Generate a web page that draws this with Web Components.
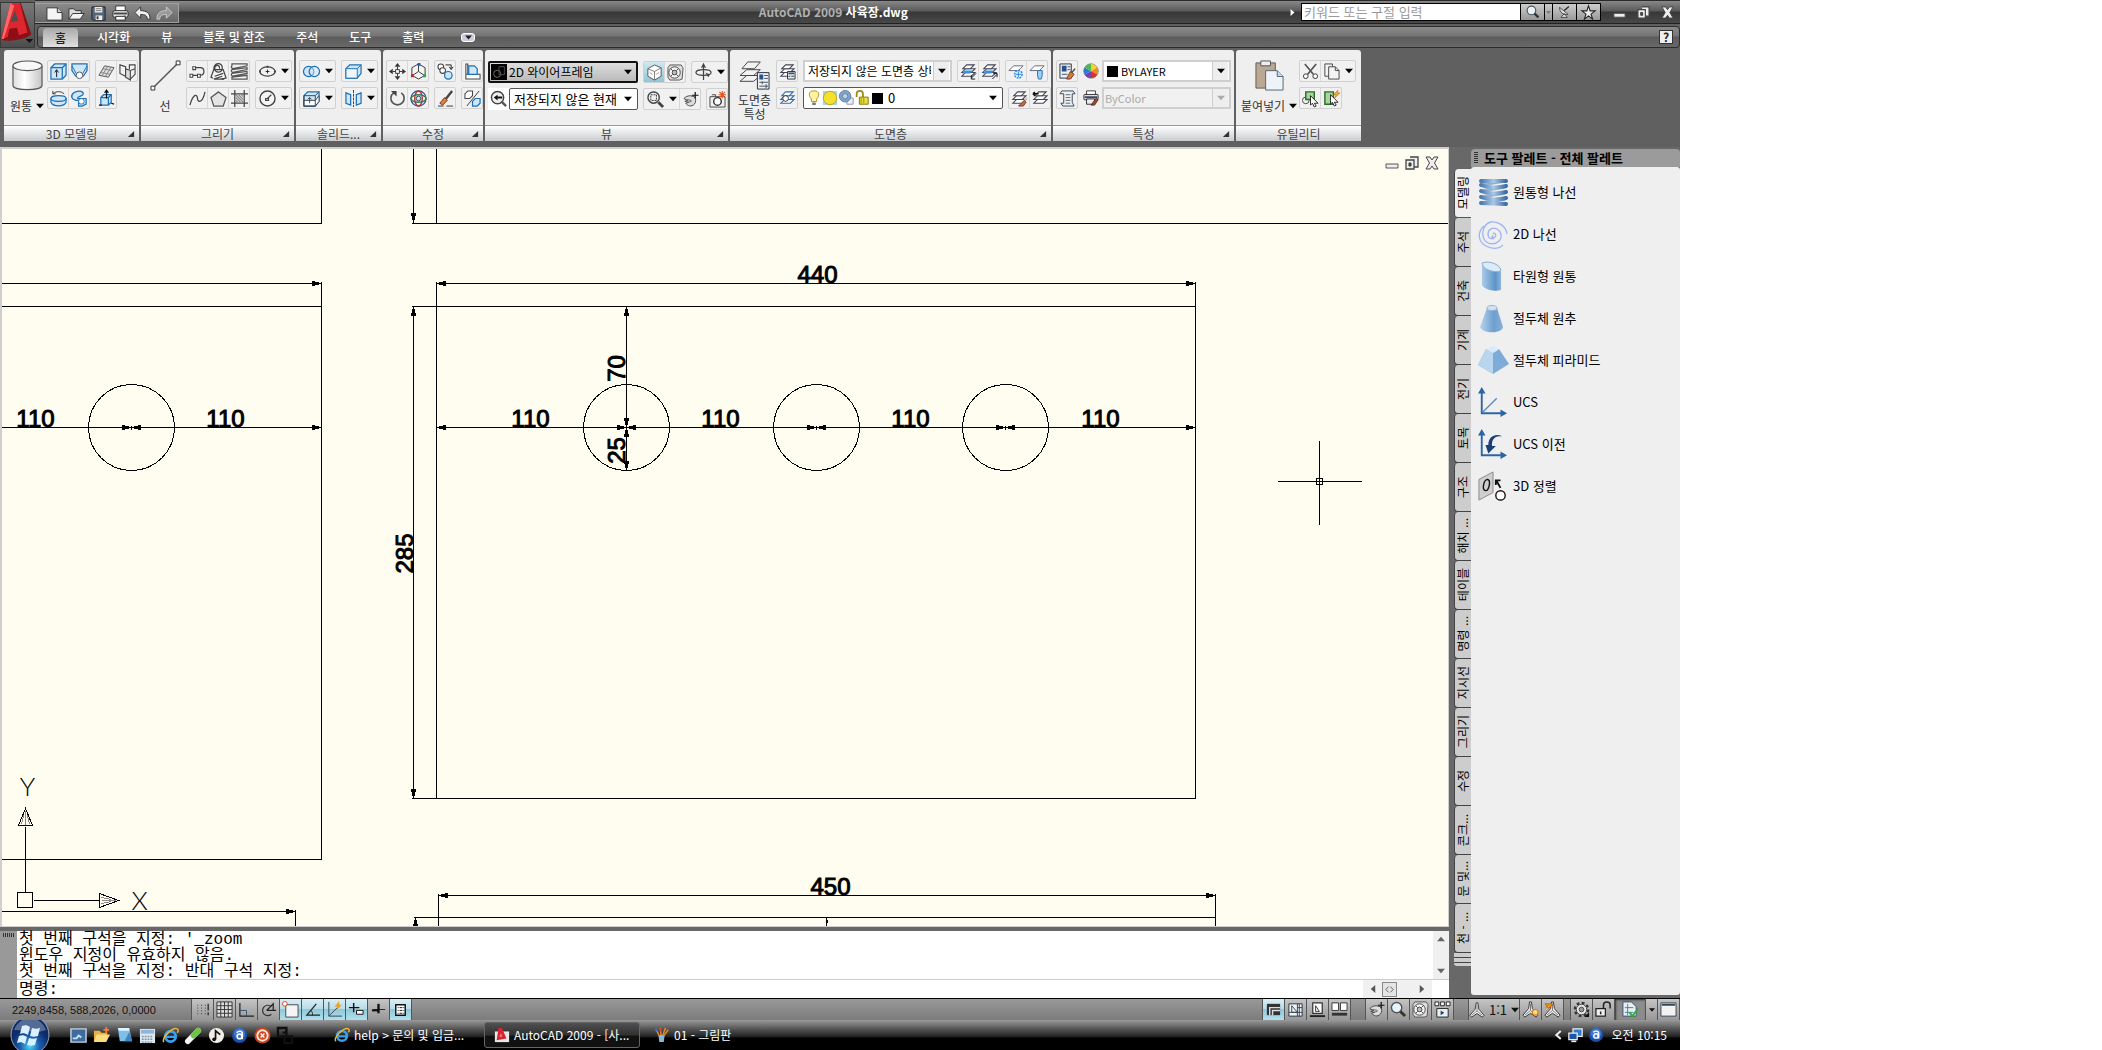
<!DOCTYPE html>
<html lang="ko">
<head>
<meta charset="utf-8">
<title>AutoCAD 2009 사육장.dwg</title>
<style>
  body {
    margin: 0;
    background: #fff;
    color: #222;
    font: 12px/16px "Noto Sans CJK KR", "Liberation Sans", sans-serif;
  }
</style>
</head>
<body>
<cad-app></cad-app>

<script>
// =============================================================
//  Icons. Every entry is [viewBox size, svg body].
//  <cad-icon name="save" size="18"></cad-icon>
// =============================================================
const G = 'fill="none" stroke="#444" stroke-width="1.3"';
const B = 'fill="#cfe6f7" stroke="#1c6fb5" stroke-width="1.3"';
const W = 'fill="#fff" stroke="#444" stroke-width="1.1"';
const layers = (c) => `<g fill="#fff" stroke="${c || '#445'}" stroke-width="1.1"><path d="M2 14l4-4h10l-4 4z"/><path d="M2 10l4-4h10l-4 4z"/><path d="M3 6l4-4h8l-4 4z"/></g>`;
const globe = '<circle cx="9" cy="9" r="8" fill="#1c50a8"/><circle cx="9" cy="7" r="6" fill="#3d78cc"/>';
const ie = '<circle cx="9" cy="10" r="5.5" fill="none" stroke="#39a0ee" stroke-width="3"/><path d="M4 10.500h11" stroke="#39a0ee" stroke-width="2.500"/><path d="M2 16C-1 12 11 0 16 2c2 1 1 3 0 4" fill="none" stroke="#f2b632" stroke-width="1.600"/>';
const person = '<path d="M8 1h2l1 7 6 7-2 2-6-4-6 4-2-2 6-7z" fill="#eee" stroke="#333"/><path d="M9 3v7M3 15l6-5 6 5" fill="none" stroke="#777"/>';
const hand = '<path d="M2 8c2-2 4-3 7-3l4 1c2 2 2 6 0 8-3 3-7 2-9-1l3-1-4-1 3-1-4-2z" fill="#ddd" stroke="#444"/><path d="M5 9l5 1M6 12l4-1" stroke="#666"/><path d="M14 1v7M10.500 4.500h7" stroke="#111" stroke-width="1.300"/>';
const lens = '<circle cx="7" cy="7" r="5.500" fill="#e6f4fb" stroke="#555" stroke-width="1.500"/><path d="M11 11l5 5" stroke="#333" stroke-width="3"/>';
const axes = '<path d="M4 29V4M4 28H28" stroke="#2c65a5" stroke-width="2" fill="none"/><path d="M0 7L4 0l4 7zM24 24l7 4-7 4z" fill="#2c65a5"/>';

const ICONS = {
  logo: [40, '<path d="M13 0h10l11 33c-5 5-20 8-31 6z" fill="#8d0f16"/><path d="M12 0h10l8 31-9 3-2-8-8 1-2 9-7 2z" fill="#dd2630"/><path d="M17 8l3 11-8 1z" fill="#4d4d4d"/><path d="M12 0l-9 38 2 0L16 3z" fill="#ff6a6a"/><path d="M28 38h8l-4 4z" fill="#111"/>'],
  newf: [18, '<path d="M1 3h11l5 5v8H1z" fill="#f4f4f4" stroke="#333"/><path d="M12 3v5h5" fill="#ccc" stroke="#333"/>'],
  open: [18, '<path d="M1 15V4h5l2 2h6v3" fill="#ddd" stroke="#333"/><path d="M1 15l4-6h12l-4 6z" fill="#f2f2f2" stroke="#333"/>'],
  save: [18, '<path d="M2 2h14v14H3l-1-1z" fill="#566479" stroke="#222"/><path d="M5 2h8v6H5zM6 11h7v5H6z" fill="#eee"/><path d="M6 4h6M6 6h6" stroke="#777"/><path d="M7 12h2v3H7z" fill="#333"/>'],
  print: [18, '<path d="M4 6V1h10v5" fill="#fff" stroke="#333"/><rect x="1" y="6" width="16" height="7" rx="2" fill="#eee" stroke="#222"/><path d="M2 9h14" stroke="#444" stroke-width="2"/><path d="M4 12h10v4H4z" fill="#fff" stroke="#222"/><path d="M12 11h3" stroke="#6c3"/>'],
  undo: [18, '<path d="M1 8l6-6v4c6 0 10 2 10 9h-3c0-4-2-5-7-5v4z" fill="#f2f2f2" stroke="#333"/>'],
  redo: [18, '<path d="M17 8l-6-6v4C5 6 1 8 1 15h3c0-4 2-5 7-5v4z" fill="#999" stroke="#ccc"/>'],
  cyl: [32, '<defs><linearGradient id="c"><stop stop-color="#ddd"/><stop offset=".4" stop-color="#fff"/><stop offset="1" stop-color="#c4c4c4"/></linearGradient></defs><path d="M1 6v20c0 6 30 6 30 0V6" fill="url(#c)" stroke="#555" stroke-width="1.200"/><ellipse cx="16" cy="6" rx="15" ry="5" fill="#f8f8f8" stroke="#555" stroke-width="1.200"/>'],
  extrude: [18, `<path d="M1 5l4-4h12v12l-4 4H1z" ${B}/><path d="M1 5h12v12M13 5l4-4" ${B} fill-opacity="0"/><path d="M7 15V8M5 10l2-3 2 3" fill="none" stroke="#112"/>`],
  loft: [18, `<path d="M1 1h16v7l-4 6H5L1 8z" ${B}/><path d="M1 3l5 9M17 3l-5 9" stroke="#1c6fb5"/><circle cx="9" cy="13" r="3.500" fill="#fff" stroke="#456"/>`],
  revolve: [18, `<path d="M1 9v4c2 5 14 5 16 0V9z" ${B}/><ellipse cx="9" cy="9" rx="8" ry="3" ${B}/><path d="M3 4c4-3 8-3 12 0M3 1v3h3" fill="none" stroke="#333"/>`],
  sweep: [18, `<path d="M3 3c4-3 10-2 10 1s-6 2-6 5h9v6l-4 2H8v-6C0 11-1 6 3 3z" ${B}/><circle cx="11" cy="12" r="3" fill="#fff" stroke="#1c6fb5"/>`],
  mesh: [18, '<path d="M1 13L7 3l10 2-6 10z" fill="#ddd" stroke="#555"/><path d="M3 10l10 2M5 6l10 2M4 14l6-10M8 14l6-10" stroke="#888"/>'],
  planes: [18, '<path d="M1 2l6 2v10l-6-3z" fill="#f2f2f2" stroke="#444" stroke-width="1.200"/><path d="M7 6l5 2v10l-5-3z" fill="#ddd" stroke="#444" stroke-width="1.200"/><path d="M12 8l5-2V2h-6v5M12 17l5-5V6" fill="#f2f2f2" stroke="#444" stroke-width="1.200"/>'],
  pressp: [18, `<path d="M3 8l3-3h8v8l-3 3H3z" ${B}/><path d="M3 8h8v8M11 8l3-3" ${B} fill-opacity="0"/><path d="M9 9V1M7 3l2-3 2 3M1 16h3M14 14l3 1" fill="none" stroke="#111" stroke-width="1.300"/>`],
  line: [32, '<path d="M3 29L29 3" stroke="#555" stroke-width="1.500"/><path d="M1 27h4v4H1zM27 1h4v4h-4z" fill="#fff" stroke="#333"/>'],
  pline: [18, `<path d="M2 13h8M6 5h6c5 0 5 8 0 8" ${G}/><path d="M1 12h3v3H1zM9 12h3v3H9zM4 4h3v3H4z" ${W}/>`],
  donut: [18, `<path d="M3 16L1 15 4 7h10l3 9-5 1" ${G}/><path d="M4 7c0-8 9-8 9-2s-8 6-8 1 6-4 5 0M4 17l9-3M5 14l9-3M5 17h10" ${G}/>`],
  helix: [18, '<g fill="none" stroke="#555" stroke-width="1.300"><path d="M1 1h16v2L2 6c-2-1-2-2-1-3zM17 5v2L2 10c-2-1-2-2-1-3zM17 9v2L2 14c-2-1-2-2-1-3zM17 13v4H1v-2z"/></g>'],
  spline: [18, `<path d="M1 16C5 2 9 5 9 9s5 6 8-7" ${G}/>`],
  poly: [18, '<path d="M9 2l8 6-3 9H4L1 8z" fill="#e4e4e4" stroke="#555" stroke-width="1.300"/>'],
  hatch: [18, `<path d="M4 0v18M14 0v18M0 4h18M0 14h18" ${G}/><path d="M5 8l5 5M5 5l8 8M8 5l5 5M5 11l2 2M11 5l2 2" stroke="#888" stroke-width="1.300"/>`],
  ellipse: [18, `<ellipse cx="9" cy="9" rx="8" ry="5" ${G}/><path d="M9 7v4M7 9h4" stroke="#222"/><path d="M0 8h2v2H0zM16 8h2v2h-2zM8 3h2v2H8z" fill="#444"/>`],
  circle: [18, `<circle cx="9" cy="9" r="8" fill="#f4f4f4" stroke="#444" stroke-width="1.500"/><path d="M9 9l4-4M7 9h3v2H7z" ${G}/>`],
  union: [18, `<circle cx="6" cy="9" r="5.500" ${B}/><circle cx="12" cy="9" r="5.500" ${B} fill-opacity=".5"/>`],
  box: [18, `<path d="M1 6l4-4h12v9l-4 5H1z" ${B}/><path d="M1 6h12v10H1z" fill="#eef6fc" stroke="#1c6fb5"/><path d="M13 6l4-4" stroke="#1c6fb5"/>`],
  slice: [18, `<path d="M1 6l4-4h12v10l-4 5H1z" ${B}/><path d="M1 11h12l4-5v6l-4 5H1z" fill="#fff" stroke="#345"/><path d="M1 6h12v11H1zM13 6l4-4M7 14V8M5 10l2-2 2 2" fill="none" stroke="#345"/>`],
  mirror3: [18, `<path d="M1 3l5 2v11l-5-2zM17 3l-5 2v11l5-2z" ${B}/><path d="M9 0v18" stroke="#333" stroke-dasharray="3 1"/>`],
  move: [18, '<path d="M9 0l3 4H6zM9 18l3-4H6zM0 9l4-3v6zM18 9l-4-3v6z" fill="#333"/><path d="M7 7h4v4H7z" fill="#fff" stroke="#333"/><path d="M9 4v3M9 11v3M4 9h3M11 9h3" stroke="#333"/>'],
  move3: [18, '<path d="M9 1l7 4v8l-7 4-7-4V5z" fill="#f4f4f4" stroke="#333"/><path d="M9 9V2M9 9l-6 4M9 9l6 4" stroke="#333"/><path d="M1 12h3v3H1z" fill="#c22"/><path d="M14 12h3v3h-3z" fill="#2a5"/><path d="M8 0h3v3H8z" fill="#25c"/>'],
  copy: [18, `<circle cx="4" cy="4" r="3" ${W}/><circle cx="6" cy="8" r="3" ${W}/><circle cx="12" cy="13" r="4" ${B}/><path d="M9 2h6v4M13 4l2 3 2-3" fill="none" stroke="#222"/>`],
  stretch: [18, `<path d="M2 1h2v11H2zM2 12h15v5H2z" ${W}/><path d="M5 3h6l3 3v6H5z" ${B}/>`],
  rotate: [18, '<path d="M5 3a7 7 0 1 0 8 0" fill="none" stroke="#555" stroke-width="1.700"/><path d="M2 1h6v6z" fill="#444"/>'],
  rot3: [18, '<circle cx="9" cy="9" r="8" fill="none" stroke="#2a4f9a" stroke-width="1.300"/><ellipse cx="9" cy="9" rx="4" ry="8" fill="none" stroke="#b33" stroke-width="1.500"/><ellipse cx="9" cy="9" rx="8" ry="4" fill="none" stroke="#3a7a4a" stroke-width="1.500"/><circle cx="9" cy="9" r="2.500" fill="#cde" stroke="#345"/>'],
  erase: [18, '<path d="M16 1L8 11" stroke="#444" stroke-width="2.500"/><path d="M8 8l3 3-5 5-3-2z" fill="#e08030" stroke="#733"/><path d="M1 17h6M10 17h7" stroke="#333"/>'],
  chamfer: [18, `<path d="M1 4l3-3h5v5L6 9H1z" ${W}/><path d="M9 12l3-3h5v5l-3 3H9z" ${B}/><path d="M3 17L16 1" stroke="#333"/>`],
  vs: [18, '<path d="M0 0h18v18H0z" fill="#000"/><circle cx="7" cy="11" r="4" fill="none" stroke="#777"/><path d="M9 3h6v9H9z" fill="none" stroke="#555"/>'],
  back: [18, '<circle cx="8" cy="8" r="6.500" fill="#eee" stroke="#444" stroke-width="1.500"/><path d="M4 8l4-3v2h5v2H8v2z" fill="#111"/><path d="M12 12l5 5" stroke="#555" stroke-width="2.500"/>'],
  cube: [18, '<path d="M2 5l7-4 7 3v9l-7 4-7-4z" fill="#fff" stroke="#555"/><path d="M2 5l7 3v9M9 8l7-4" fill="none" stroke="#777"/><path d="M11 11l3-2M4 9l3 2" stroke="#999"/>'],
  wheel: [18, '<path d="M3 1h12l2 3-1 12-3 1H3l-2-3V4z" fill="#ddd" stroke="#555"/><circle cx="8" cy="9" r="6" fill="#f6f6f6" stroke="#444"/><circle cx="8" cy="9" r="2.500" fill="#bbb" stroke="#444"/><path d="M4 5l2 2M12 5l-2 2M4 13l2-2M12 13l-2-2" stroke="#444"/>'],
  orbit: [18, `<path d="M9 1v16M7 4l2-4 2 4" ${G}/><ellipse cx="9" cy="9" rx="8" ry="3" ${G}/><path d="M11 9l3 5 2-3z" fill="#444"/>`],
  zoomw: [18, '<circle cx="7" cy="7" r="6" fill="#eee" stroke="#444" stroke-width="1.500"/><path d="M4 4h6v6H4z" fill="none" stroke="#333" stroke-dasharray="2 1"/><path d="M12 12l5 5" stroke="#444" stroke-width="3"/>'],
  pan: [18, hand],
  camera: [18, '<path d="M1 6h16v11H1zM3 4h4v2" fill="#eee" stroke="#444"/><circle cx="9" cy="11" r="4" fill="#fff" stroke="#333" stroke-width="1.500"/><path d="M14 0v8M10 4h8M11 1l6 6M17 1l-6 6" stroke="#e5541c" stroke-width="1.200"/>'],
  layprop: [32, '<g fill="#f2f2f2" stroke="#444"><path d="M1 22l7-6h14l-7 6zM1 16l7-6h14l-7 6zM3 9l6-7h13l-6 7z"/></g><path d="M19 13h12v17H19z" fill="#eee" stroke="#234"/><path d="M21 15h4v5h-4z" fill="#27518a"/><path d="M26 16h4M26 19h4M21 23h9M21 27h9M24 22v3M28 25v4" stroke="#456"/>'],
  laystate: [18, layers() + '<path d="M9 9h8v8H9z" fill="#eee" stroke="#234"/><path d="M10 11h6" stroke="#27518a" stroke-width="2"/><path d="M10 14h2M13 14h3" stroke="#333"/>'],
  layiso: [18, layers('#2a6cb0') + '<circle cx="7" cy="9" r="3" fill="#fff" stroke="#333"/>'],
  laydown: [18, layers() + '<path d="M5 8h9l-3 3H2z" fill="#3a8fd8"/><path d="M17 11l-5 5M12 13v4h4" fill="none" stroke="#111"/>'],
  layup: [18, layers() + '<path d="M5 8h9l-3 3H2z" fill="#3a8fd8"/><path d="M12 17l5-5M13 11h4v4" fill="none" stroke="#111"/>'],
  layfrz: [18, '<path d="M1 8l5-5h10l-5 5z" fill="#fff" stroke="#667"/><circle cx="11" cy="12" r="4" fill="#e4f2fc" stroke="#2c86d8" stroke-width="1.500" stroke-dasharray="2 1"/><path d="M11 9v6M8 12h6" stroke="#2c86d8"/>'],
  layoff: [18, '<path d="M1 8l5-5h10l-5 5z" fill="#fff" stroke="#667"/><path d="M9 8h5v5l-1 4h-3l-1-4z" fill="#9cd0f4" stroke="#2a6cb0"/>'],
  laymatch: [18, layers() + '<path d="M17 8l-4 5" stroke="#ccc" stroke-width="2"/><path d="M14 11l2 2-3 4H8z" fill="#c8702a" stroke="#733"/>'],
  layprev: [18, layers() + '<path d="M1 4h6M1 4l2-2M1 4l2 2" fill="none" stroke="#111" stroke-width="1.500"/>'],
  bulb: [18, '<path d="M9 1c-7 0-6 6-3 9v3h6v-3c3-3 4-9-3-9z" fill="#fff3a0" stroke="#a98a1a"/><path d="M7 14h4v3H7z" fill="#777"/>'],
  sun: [18, '<path d="M1 1h16v16H1z" fill="#9fd8e8"/><circle cx="9" cy="9" r="7.500" fill="#f4e12c" stroke="#c8a010"/>'],
  vpfrz: [18, '<path d="M10 9h7v7h-7z" fill="#eef" stroke="#88a"/><circle cx="8" cy="7" r="6.500" fill="#7fa4c8" stroke="#5b7da0"/><circle cx="8" cy="7" r="3" fill="#bcd2e6" stroke="#5b7da0"/>'],
  lock: [18, '<path d="M3 8V4c0-4 7-4 7 0v4" fill="none" stroke="#998c10" stroke-width="2"/><path d="M6 8h10v8H6z" fill="#e8de3c" stroke="#7a7010"/><path d="M8 9v6M11 9v6" stroke="#998c10"/>'],
  black: [16, '<path d="M2 3h11v11H2z" fill="#000"/>'],
  match: [18, '<path d="M1 1h12v15H1z" fill="#eee" stroke="#234"/><path d="M3 3h5v6H3z" fill="#27518a"/><path d="M9 4h3M9 7h3M3 12h6" stroke="#456"/><path d="M17 6l-4 5" stroke="#444" stroke-width="1.500"/><path d="M12 9l4 3-4 5H8z" fill="#d08038" stroke="#733"/>'],
  color: [18, '<circle cx="9" cy="9" r="8" fill="#fff" stroke="#666"/><path d="M9 9V1a8 8 0 0 1 7 4z" fill="#f3d22e"/><path d="M9 9l7-4a8 8 0 0 1 0 8z" fill="#f08a24"/><path d="M9 9l7 4a8 8 0 0 1-7 4z" fill="#d8322c"/><path d="M9 9v8a8 8 0 0 1-7-4z" fill="#7a3fb0"/><path d="M9 9l-7 4a8 8 0 0 1 0-8z" fill="#2f7bd4"/><path d="M9 9L2 5a8 8 0 0 1 7-4z" fill="#4fb848"/>'],
  list: [18, '<path d="M3 1h12l2 3h-3v9l2 4H4l-2-3h3V4H1z" fill="#eef0f2" stroke="#345"/><path d="M7 5h5M7 8h5M7 11h5M7 14h5" stroke="#567"/>'],
  plotst: [18, '<path d="M4 6V1h10v5" fill="#fff" stroke="#333"/><rect x="1" y="5" width="16" height="6" rx="1" fill="#dde" stroke="#222"/><path d="M2 8h14" stroke="#446" stroke-width="2"/><path d="M4 10h9v6H4z" fill="#eee" stroke="#222"/><path d="M15 9l2 2-4 6H9z" fill="#a05028" stroke="#522"/>'],
  paste: [32, '<path d="M2 3h20v26H2z" fill="#b9a994" stroke="#665a4c"/><path d="M7 1h10v5H7z" fill="#eee" stroke="#555"/><path d="M12 11h12l6 6v14H12z" fill="#eef3f8" stroke="#567"/><path d="M24 11v6h6" fill="#cbd8e4" stroke="#567"/>'],
  cut: [18, '<path d="M3 1l9 11M15 1L6 12" stroke="#555" stroke-width="1.800"/><circle cx="4" cy="14" r="2.500" fill="#fff" stroke="#333"/><circle cx="14" cy="14" r="2.500" fill="#fff" stroke="#333"/>'],
  copyclip: [18, '<path d="M2 1h8v13H2z" fill="#f4f4f4" stroke="#444"/><path d="M6 4h7l4 4v9H6z" fill="#f4f4f4" stroke="#444"/><path d="M13 4v4h4" fill="none" stroke="#444"/>'],
  selsim: [18, '<circle cx="4" cy="11" r="3.500" fill="none" stroke="#444"/><path d="M4 2h9v8H4z" fill="#a7d69a" stroke="#2a6a2a" stroke-width="1.500"/><path d="M9 6v10l2-2 2 4 2-1-2-3h4z" fill="#fff" stroke="#222"/>'],
  qsel: [18, '<path d="M2 2h9v13H2z" fill="#a7d69a" stroke="#2a6a2a" stroke-width="1.500"/><path d="M8 5v10l2-2 2 4 2-1-2-3h4z" fill="#fff" stroke="#222"/><path d="M16 0l-5 5h3l-2 4 6-6h-3z" fill="#f4b020" stroke="#c46010" stroke-width=".6"/>'],
  lens: [18, lens],
  dish: [18, '<path d="M2 3c0 7 5 10 11 9zM4 16h8l-4-5z" fill="#ddd" stroke="#333"/><path d="M8 7l6-5" stroke="#222" stroke-width="1.500"/>'],
  star: [18, '<path d="M9 1l2 6h6l-5 4 2 6-5-4-5 4 2-6-5-4h6z" fill="#eee" stroke="#222" stroke-width="1.300"/>'],
  min: [14, '<path d="M1 8h12v4H1z" fill="#eee" stroke="#555"/>'],
  restore: [14, '<path d="M5 1h8v10H9" fill="#eee" stroke="#444" stroke-width="1.300"/><path d="M1 4h8v9H1z" fill="#eee" stroke="#444" stroke-width="1.300"/><path d="M4 7h2v3H4z" fill="#555" stroke="#333"/>'],
  close: [14, '<path d="M1 1h4l2 3 2-3h4L9.500 7l3.500 6H9l-2-3-2 3H1l3.500-6z" fill="#eee" stroke="#444"/>'],
  helixp: [30, '<defs><linearGradient id="h" x2="1" y2="0"><stop stop-color="#4a7ab0"/><stop offset=".5" stop-color="#a9c8e6"/><stop offset="1" stop-color="#3d6ca2"/></linearGradient></defs><path d="M3 8l24-4M3 14l24-4M3 20l24-4M3 26l24-4" stroke="#8fb2d6" stroke-width="3"/><g fill="none" stroke="url(#h)" stroke-width="4" stroke-linecap="round"><path d="M3 4h25M3 8c7 3 18 3 25 1M3 14c7 3 18 3 25 1M3 20c7 3 18 3 25 1M3 26l25 1"/></g>'],
  spiral: [30, '<path d="M15 15c1-2 4 0 2 3s-7 2-7-3 5-7 9-5 6 8 2 12-12 4-15-2S6 4 13 3s15 4 16 12M15 16c-2 3-1 3 1 2M6 7C-1 13 0 23 8 27s14 2 17-1" fill="none" stroke="#9db4f4" stroke-width="1.300"/>'],
  ecyl: [30, '<defs><linearGradient id="e"><stop stop-color="#a9cbea"/><stop offset=".7" stop-color="#5d93c9"/><stop offset="1" stop-color="#8db6de"/></linearGradient></defs><path d="M4 2c8-3 19 2 19 8v19c-8 2-19-1-19-6z" fill="url(#e)"/><path d="M4 2c8-3 19 2 19 8-7 2-18-1-19-8z" fill="#dcebf8" stroke="#8fb0d0"/>'],
  cone: [30, '<defs><linearGradient id="k"><stop stop-color="#b8d4ee"/><stop offset=".6" stop-color="#6d9fd0"/><stop offset="1" stop-color="#88b0d8"/></linearGradient></defs><path d="M9 5L2 24c2 7 22 7 23 0L19 5z" fill="url(#k)"/><ellipse cx="14" cy="5" rx="5" ry="2.500" fill="#cfe3f5" stroke="#9ab8d6"/>'],
  pyr: [30, '<path d="M8 4L0 20l15 9 16-10L21 4l-6 4z" fill="#7fabd8"/><path d="M8 4L0 20l15 9V8z" fill="#b9d6ef"/><path d="M8 4l7-3 6 3-6 4z" fill="#d9eafa"/>'],
  ucs: [32, axes + '<path d="M5 27L20 12" stroke="#5b8cc4" stroke-width="1.500"/>'],
  ucsp: [32, axes + '<path d="M26 8C18 6 14 12 15 18h4l-8 8-3-9h3c0-9 8-13 15-9z" fill="#1c3f78"/>'],
  align: [32, '<path d="M1 9l15-8v22L1 31z" fill="#cfcfcf" stroke="#888"/><ellipse cx="9" cy="15" rx="3" ry="6" transform="rotate(12 9 15)" fill="none" stroke="#111" stroke-width="1.500"/><circle cx="24" cy="26" r="5" fill="#fff" stroke="#211" stroke-width="1.500"/><path d="M24 18l-4-7M19 15v-5h5" fill="none" stroke="#111" stroke-width="2"/>'],
  snap: [18, '<path d="M4 4v11M8 4v11M12 4v11" stroke="#333" stroke-dasharray="1 2"/><path d="M15 3v7M15 12v3" stroke="#222" stroke-width="1.300"/>'],
  grid: [18, '<path d="M1 1h16v16H1z" fill="#ddd"/><path d="M1 1v16M5 1v16M9 1v16M13 1v16M17 1v16M1 1h16M1 5h16M1 9h16M1 13h16M1 17h16" stroke="#333"/>'],
  ortho: [18, '<path d="M2 2v14h15" fill="none" stroke="#222" stroke-width="1.300"/><path d="M2 10h7v6" fill="none" stroke="#357"/>'],
  polar: [18, '<path d="M12 6a5.500 5.500 0 1 0 0 8" fill="none" stroke="#333" stroke-width="1.300"/><path d="M7 10h10M7 10l7-7v7" fill="none" stroke="#222" stroke-width="1.300"/>'],
  osnap: [18, '<path d="M4 4h13v13H4z" fill="#f4f4f4" stroke="#444"/><circle cx="3" cy="3" r="2.500" fill="#fff" stroke="#e04a1c"/>'],
  otrack: [18, '<path d="M13 3L3 15h14" fill="none" stroke="#222" stroke-width="1.300"/><path d="M7 10c2 1 2 3 2 5" fill="none" stroke="#222"/>'],
  ducs: [18, '<path d="M3 1v15h14M3 16L13 6" fill="none" stroke="#345"/><path d="M14 0l-5 6h3l-1 4 6-6h-3z" fill="#f4a020"/>'],
  dyn: [18, '<path d="M1 7h11M6 2v10" stroke="#111" stroke-width="1.500"/><path d="M9 10h7v4H9z" fill="#fff" stroke="#111"/>'],
  lwt: [18, '<path d="M3 9h13" stroke="#222"/><path d="M9 3v10" stroke="#111" stroke-width="2.500"/><path d="M2 10h7" stroke="#111" stroke-width="2"/>'],
  qp: [18, '<path d="M4 4h10v11H4z" fill="#fff" stroke="#111" stroke-width="1.500"/><path d="M6 7h7M6 10h7M6 13h7" stroke="#111" stroke-dasharray="1 1 3"/>'],
  model: [18, '<path d="M2 3h14v12H2z" fill="#333"/><path d="M5 15V7h11M8 15v-5h8" fill="none" stroke="#ddd" stroke-width="1.500"/>'],
  layout: [18, '<path d="M2 3h14v13H2z" fill="#f2f2f2" stroke="#234"/><path d="M5 5l6 7H5zM11 3v13M2 12h14M13 3v13M11 7h5" fill="none" stroke="#345"/>'],
  lay1: [18, '<path d="M4 2h10v11H4z" fill="#fff" stroke="#333" stroke-width="1.300"/><path d="M7 5l4 6H7z" fill="none" stroke="#333"/><path d="M1 16h16" stroke="#222" stroke-width="2"/>'],
  qview: [18, '<path d="M1 2h7v8H1zM10 2h7v8h-7z" fill="#fff" stroke="#333"/><path d="M1 14h16" stroke="#333" stroke-width="3"/>'],
  motion: [18, '<path d="M1 1h4v4H1zM7 1h4v4H7zM13 1h4v4h-4z" fill="#fff" stroke="#222"/><path d="M3 8h12v9H3z" fill="#e8f2f6" stroke="#222"/><path d="M7 10l4 2.500-4 2.500z" fill="#246"/>'],
  person: [18, person],
  person2: [18, person + '<circle cx="14" cy="12" r="3" fill="#ffe08a" stroke="#e07a1c" stroke-width="1.300"/>'],
  person3: [18, person + '<path d="M1 3h8L5 8zM2 7l3-3" fill="#f4a020" stroke="#c06010"/>'],
  gear: [18, '<circle cx="9" cy="9" r="7" fill="none" stroke="#333" stroke-width="2.500" stroke-dasharray="3 2.500"/><circle cx="9" cy="9" r="5.500" fill="#e8e8e8" stroke="#444"/><circle cx="9" cy="9" r="2.500" fill="#999" stroke="#444"/><path d="M12 17h5v-5z" fill="#111"/>'],
  unlock: [18, '<path d="M1 8h10v8H1z" fill="#eee" stroke="#222" stroke-width="1.300"/><path d="M9 8V4c0-4 7-4 7 0v4M6 11v3" fill="none" stroke="#222" stroke-width="1.600"/>'],
  dwg: [18, '<path d="M1 1h9l5 5v10H1z" fill="#e6f0f4" stroke="#357"/><path d="M3 7h9M6 3v12M3 12h9" stroke="#579"/><path d="M8 12l3 4 6-8" fill="none" stroke="#3a3" stroke-width="2"/>'],
  clean: [18, '<path d="M1 2h16v14H1z" fill="#f2f2f2" stroke="#345"/><path d="M2 4h14" stroke="#345" stroke-width="2"/>'],
  orb: [40, '<defs><radialGradient id="o" cy=".8"><stop stop-color="#48d8f8"/><stop offset=".5" stop-color="#1d5fae"/><stop offset="1" stop-color="#0d2b66"/></radialGradient></defs><circle cx="20" cy="20" r="19" fill="url(#o)" stroke="#9ab"/><path d="M4 15C10-1 30-1 36 15c-10 4-22 0-32 0z" fill="#fff" opacity=".3"/><path d="M12 11c3-1 5-1 8 1l-2 8c-3-2-6-2-8-1zM22 13c3 1 5 1 8 0l-2 8c-3 1-5 1-8 0zM9 21c3-1 5-1 8 1l-2 7c-3-2-5-2-8-1zM19 23c3 1 5 1 8 0l-2 7c-3 1-5 1-8 0z" fill="#d8f0ff"/>'],
  desk: [18, '<path d="M1 2h16v14H1z" fill="#3f6c9c" stroke="#c8d4e0" stroke-width="1.500"/><path d="M3 12h4l2-3 3 2" fill="none" stroke="#bfe4ff" stroke-width="2"/>'],
  folder: [18, '<path d="M1 16V4h6l2 2h6v3z" fill="#e8b040"/><path d="M1 16l3-8h14l-4 8z" fill="#fbdc80"/><path d="M14 0v7M11 3h6" stroke="#ff7a2a" stroke-width="2"/>'],
  note: [18, '<path d="M2 1h12l3 14H4z" fill="#7cc0ea"/><path d="M2 1h12v3H3z" fill="#e4f4ff"/><path d="M14 5l3 10H9z" fill="#3f86c0"/>'],
  calc: [18, '<path d="M1 2h16v15H1z" fill="#dfe8ee"/><path d="M2 3h14v4H2z" fill="#8db8dc"/><path d="M3 10h12M3 13h12M3 16h12" stroke="#7f95a8" stroke-width="1.500" stroke-dasharray="2 1"/>'],
  ie: [18, ie],
  pill: [18, '<path d="M3 15L14 4" stroke="#f4f4f4" stroke-width="6" stroke-linecap="round"/><path d="M9 9l5-5" stroke="#6cc644" stroke-width="6" stroke-linecap="round"/>'],
  music: [18, '<circle cx="9" cy="9" r="8" fill="#f0eee6"/><path d="M8 13V4l5 4" fill="none" stroke="#111" stroke-width="1.800"/><circle cx="6.500" cy="13" r="2" fill="#111"/>'],
  globea: [18, globe + '<circle cx="9" cy="10" r="2.500" fill="none" stroke="#fff" stroke-width="1.600"/><path d="M12 13V7c0-3-4-3-6-1" fill="none" stroke="#fff" stroke-width="1.600"/>'],
  ring: [18, '<circle cx="9" cy="9" r="7.500" fill="#f6e9de" stroke="#c8451c" stroke-width="2"/><circle cx="9" cy="9" r="4.500" fill="#d8431c"/><path d="M7 7l4 4M11 7l-4 4" stroke="#fff" stroke-width="1.500"/>'],
  dark: [18, '<path d="M1 1h9v9H1zM6 6h4v4h6v7H8v-6" fill="none" stroke="#101010" stroke-width="2.500"/>'],
  acad: [18, '<path d="M1 5h16v12H1z" fill="#e8e8e8"/><path d="M5 1h4l5 12-11 2z" fill="#d82430"/><path d="M8 7l1 4H6z" fill="#fff" opacity=".5"/>'],
  brush: [18, '<path d="M5 9l7 0-1 8H6z" fill="#86b8dc"/><path d="M6 10L2 2M8 9L7 1M10 9l3-8M11 10l5-7" stroke="#d9862a" stroke-width="1.800"/><path d="M8 5V1" stroke="#c33" stroke-width="2"/><path d="M3 5L2 2" stroke="#3a6ad0" stroke-width="2"/>'],
  net: [18, '<path d="M6 1h11v9H6z" fill="#2f7bd0" stroke="#eee" stroke-width="1.500"/><path d="M1 6h10v8H1z" fill="#1c55a4" stroke="#eee" stroke-width="1.500"/><path d="M4 16h6" stroke="#eee" stroke-width="2"/>'],
  down: [9, '<path d="M0 2h9L4.500 7z" fill="currentColor"/>'],
  up: [9, '<path d="M0 7h9L4.500 2z" fill="currentColor"/>'],
  left: [9, '<path d="M7 0v9L2 4.500z" fill="currentColor"/>'],
  right: [9, '<path d="M2 0v9l5-4.500z" fill="currentColor"/>'],
  corner: [9, '<path d="M8 1v7H1z" fill="#333"/>'],
  chev: [9, '<path d="M7 1L3 4.500 7 8" fill="none" stroke="#eee" stroke-width="1.800"/>'],
  thumb: [14, '<path d="M6 4L3 7l3 3M8 4l3 3-3 3" fill="none" stroke="#555"/>']
};

const icon = (name, size = 18) => `<cad-icon name="${name}" size="${size}"></cad-icon>`;

// Small helper: define an element from a markup function
function define(tag, render) {
  customElements.define(tag, class extends HTMLElement {
    constructor() {
      super();
      this.attachShadow({ mode: "open" });
    }
    connectedCallback() {
      this.shadowRoot.innerHTML = render(this);
    }
  });
}

define("cad-icon", (el) => {
  const [box, body] = ICONS[el.getAttribute("name")];
  const size = el.getAttribute("size") || 18;
  return `
    <style>
      :host { display: inline-flex; flex: none; }
      svg { display: block; overflow: visible; }
    </style>
    <svg width="${size}" height="${size}" viewBox="0 0 ${box} ${box}" aria-hidden="true">${body}</svg>`;
});

// ---------- top: application button, quick access, search, tabs ----------
define("cad-header", () => `
  <style>
    :host { display: flex; height: 48px; background: #5f5f5f; }
    button { border: 0; padding: 0; background: none; font: inherit; color: inherit; display: flex; align-items: center; justify-content: center; }
    .app { width: 35px; flex: none; margin-top: 2px; border: 1px solid #3a3a3a; box-sizing: border-box; background: linear-gradient(#777, #4d4d4d); align-items: flex-start; }
    .right { flex: 1; min-width: 0; }
    .bar { display: grid; grid-template-columns: 44% auto 1fr; height: 24px; box-sizing: border-box; border-bottom: 1px solid #222; border-top: 1px solid #2a2a2a; background: linear-gradient(#888 0, #5a5a5a 45%, #383838 50%, #484848 100%); }
    .quick { display: flex; width: 144px; height: 20px; margin-top: 2px; padding-left: 10px; gap: 4px; box-sizing: border-box; background: linear-gradient(#8a8a8a, #686868); border: 1px solid #a0a0a0; border-left: 0; }
    .quick button { width: 18px; }
    h1 { margin: 0; font-size: 12px; line-height: 22px; color: #fff; white-space: pre; }
    h1 span { color: #b0b0b0; }
    .tools { display: flex; justify-content: flex-end; align-items: center; color: #fff; padding-right: 6px; }
    .search { display: flex; height: 18px; margin: 0 12px 0 5px; border: 1px solid #000; box-sizing: border-box; }
    input { width: 218px; border: 0; padding: 0 2px; box-sizing: border-box; font: inherit; font-size: 13px; outline: 0; }
    input::placeholder { color: #9a9a9a; }
    .search button { width: 24px; box-sizing: border-box; border-left: 1px solid #000; background: linear-gradient(#ccc, #999); color: #777; }
    .search button.thin { width: 8px; }
    .win { display: flex; gap: 11px; }
    .tabs { display: flex; align-items: stretch; height: 22px; margin: 2px 0 0 2px; padding: 0 6px 0 5px; gap: 7px; box-sizing: border-box; border: 1px solid #2c2c2c; border-radius: 4px; background: linear-gradient(#8a8a8a 0, #747474 45%, #5c5c5c 50%, #686868); color: #fff; }
    .tabs button { padding: 0 12px; font-weight: 500; }
    .tabs button.on { margin-top: 1px; background: linear-gradient(#aaa, #e0e0e0); color: #222; border-radius: 4px 4px 0 0; }
    .tabs .more { padding: 0; width: 14px; height: 9px; margin: 6px 0 0 18px; border: 1px solid #fff; border-radius: 3px; background: #ccd; color: #222; box-sizing: border-box; }
    .tabs .help { margin-left: auto; padding: 0; width: 14px; height: 14px; align-self: center; border: 1px solid #333; background: #eee; color: #222; font-weight: 700; box-sizing: border-box; }
  </style>
  <button class="app" aria-label="menu">${icon("logo", 38)}</button>
  <div class="right">
    <div class="bar">
      <div class="quick">${["newf", "open", "save", "print", "undo", "redo"].map((n) => `<button aria-label="${n}">${icon(n, 17)}</button>`).join("")}</div>
      <h1><span>AutoCAD 2009 </span>사육장.dwg</h1>
      <div class="tools">
        ${icon("right", 7)}
        <div class="search">
          <input type="text" aria-label="search" placeholder="키워드 또는 구절 입력">
          <button aria-label="find">${icon("lens", 14)}</button>
          <button class="thin" aria-label="options">${icon("down", 5)}</button>
          <button aria-label="center">${icon("dish", 14)}</button>
          <button aria-label="favorites">${icon("star", 15)}</button>
        </div>
        <div class="win">${["min", "restore", "close"].map((n) => `<button aria-label="${n}">${icon(n, 13)}</button>`).join("")}</div>
      </div>
    </div>
    <nav class="tabs">
      <button class="on">홈</button><button>시각화</button><button>뷰</button><button>블록 및 참조</button><button>주석</button><button>도구</button><button>출력</button>
      <button class="more" aria-label="more">${icon("down", 7)}</button>
      <button class="help">?</button>
    </nav>
  </div>`);

// ---------- ribbon pieces ----------
// <ribbon-panel label="그리기" corner> big / row / row </ribbon-panel>
define("ribbon-panel", (el) => `
  <style>
    :host { display: flex; flex-direction: column; flex: none; height: 91px; background: #efefef; border-radius: 3px 3px 0 0; overflow: hidden; }
    .body { flex: 1; display: flex; padding: 10px 3px 0; }
    .name { display: flex; align-items: center; height: 15px; border-top: 1px solid #999; background: linear-gradient(#fff, #c9ccd0); color: #444; line-height: 14px; }
    .name b { flex: 1; font-weight: 400; text-align: center; padding-left: 12px; }
    .name span { display: flex; width: 12px; }
  </style>
  <div class="body"><slot></slot></div>
  <div class="name"><b>${el.getAttribute("label")}</b><span>${el.hasAttribute("corner") ? icon("corner", 8) : ""}</span></div>`);

define("ribbon-rows", () => `
  <style>
    :host { display: grid; grid-template-rows: 22px 22px; row-gap: 5px; align-content: start; }
  </style><slot></slot>`);

define("ribbon-row", () => `
  <style>:host { display: flex; gap: 5px; align-items: stretch; }</style><slot></slot>`);

// <tool-group icons="union:v box"> : ":v" adds a drop arrow, ":on" marks it pressed
define("tool-group", (el) => `
  <style>
    :host { display: flex; border: 1px solid #d0d0d0; box-sizing: border-box; border-radius: 2px; height: 22px; background: #f1f1f1; }
    button { width: 20px; border: 0; padding: 0; background: none; display: flex; align-items: center; justify-content: center; gap: 5px; color: #000; }
    button + button { box-sizing: border-box; width: 21px; border-left: 1px solid #d8d8d8; }
    button.v { width: 35px; }
    .on { background: linear-gradient(#cfe8f0, #8fc6d8); }
  </style>
  ${el.getAttribute("icons").split(" ").map((item) => {
    const [n, flag = ""] = item.split(":");
    return `<button class="${flag}" aria-label="${n}">${icon(n, 17)}${flag === "v" ? icon("down", 8) : ""}</button>`;
  }).join("")}`);

define("big-tool", (el) => `
  <style>
    :host { display: block; flex: none; }
    button { width: 100%; border: 0; padding: 0; background: none; font: inherit; font-size: 12px; line-height: 14px; color: #333; display: flex; flex-direction: column; align-items: center; gap: 8px; }
    :host([tall]) button { gap: 2px; }
    span { display: flex; align-items: center; gap: 4px; white-space: nowrap; text-align: center; }
    .drop { color: #000; display: inline-flex; }
  </style>
  <button>${icon(el.getAttribute("icon"), 31)}<span><div><slot></slot></div>${el.hasAttribute("drop") ? `<i class="drop">${icon("down", 8)}</i>` : ""}</span></button>`);

// Drop-down with optional icons ahead of its text
define("cad-select", (el) => `
  <style>
    :host { display: flex; align-items: center; box-sizing: border-box; height: 22px; background: #fff; border: 1px solid #555; border-radius: 2px; padding: 0 2px; overflow: hidden; color: #000; font-size: 13px; }
    :host([dark]) { background: linear-gradient(#ddd, #bbb); border: 2px solid #111; font-size: 12px; padding: 0 1px; }
    :host([flat]) { border: 2px solid #cfcfcf; border-radius: 0; font-size: 12px; padding: 0 1px; }
    :host([off]) { background: #f1f1f1; color: #aaa; }
    :host([small]) { font-size: 11px; }
    select { flex: 1; min-width: 0; height: 18px; appearance: none; border: 0; background: none; padding: 0 2px; font: inherit; color: inherit; opacity: 1; text-overflow: clip; }
    :host([small]) select { padding: 0; }
    .arrow { display: flex; width: 15px; height: 18px; align-items: center; justify-content: center; }
    :host([flat]) .arrow { background: #eee; border-left: 1px solid #ccc; }
  </style>
  ${(el.getAttribute("icons") || "").split(" ").filter(Boolean).map((n) => icon(n, 16)).join("")}
  <select aria-label="${el.getAttribute("label")}" ${el.hasAttribute("off") ? "disabled" : ""}><option>${el.getAttribute("value")}</option></select>
  <span class="arrow">${icon("down", 8)}</span>`);

define("cad-ribbon", () => `
  <style>
    :host { display: flex; gap: 2px; padding: 2px 0 6px 4px; background: #606060; }
    .solid { width: 135px; } .draw { width: 153px; } .bool { width: 85px; } .edit { width: 100px; }
    .view { width: 243px; } .layer { width: 321px; } .prop { width: 181px; } .util { width: 125px; }
    .solid big-tool { width: 40px; } .draw big-tool { width: 42px; } .layer big-tool { width: 43px; } .util big-tool { width: 60px; }
    .view ribbon-rows { padding-top: 1px; flex: 1; }
    .view cad-select { width: 150px; } .view .saved { width: 129px; }
    .view cad-icon { padding: 2px; background: #fff; }
    .view .find { gap: 0; } .view .find tool-group { margin-left: 5px; }
    .layer .state { width: 149px; } .layer .current { width: 200px; }
    .prop cad-select { width: 129px; } .prop cad-icon { align-self: center; margin-left: 2px; }
    .prop ribbon-row { gap: 3px; }
  </style>
  <ribbon-panel class="solid" label="3D 모델링" corner>
    <big-tool icon="cyl" drop>원통</big-tool>
    <ribbon-rows>
      <ribbon-row><tool-group icons="extrude loft"></tool-group><tool-group icons="mesh planes"></tool-group></ribbon-row>
      <ribbon-row><tool-group icons="revolve sweep"></tool-group><tool-group icons="pressp"></tool-group></ribbon-row>
    </ribbon-rows>
  </ribbon-panel>
  <ribbon-panel class="draw" label="그리기" corner>
    <big-tool icon="line">선</big-tool>
    <ribbon-rows>
      <ribbon-row><tool-group icons="pline donut helix"></tool-group><tool-group icons="ellipse:v"></tool-group></ribbon-row>
      <ribbon-row><tool-group icons="spline poly hatch"></tool-group><tool-group icons="circle:v"></tool-group></ribbon-row>
    </ribbon-rows>
  </ribbon-panel>
  <ribbon-panel class="bool" label="솔리드..." corner>
    <ribbon-rows>
      <ribbon-row><tool-group icons="union:v"></tool-group><tool-group icons="box:v"></tool-group></ribbon-row>
      <ribbon-row><tool-group icons="slice:v"></tool-group><tool-group icons="mirror3:v"></tool-group></ribbon-row>
    </ribbon-rows>
  </ribbon-panel>
  <ribbon-panel class="edit" label="수정" corner>
    <ribbon-rows>
      <ribbon-row><tool-group icons="move move3"></tool-group><tool-group icons="copy"></tool-group><tool-group icons="stretch"></tool-group></ribbon-row>
      <ribbon-row><tool-group icons="rotate rot3"></tool-group><tool-group icons="erase"></tool-group><tool-group icons="chamfer"></tool-group></ribbon-row>
    </ribbon-rows>
  </ribbon-panel>
  <ribbon-panel class="view" label="뷰" corner>
    <ribbon-rows>
      <ribbon-row><cad-select dark icons="vs" label="style" value="2D 와이어프레임"></cad-select><tool-group icons="cube:on wheel"></tool-group><tool-group icons="orbit:v"></tool-group></ribbon-row>
      <ribbon-row class="find">${icon("back", 17)}<cad-select class="saved" label="view" value="저장되지 않은 현재"></cad-select><tool-group icons="zoomw:v pan"></tool-group><tool-group icons="camera"></tool-group></ribbon-row>
    </ribbon-rows>
  </ribbon-panel>
  <ribbon-panel class="layer" label="도면층" corner>
    <big-tool tall icon="layprop">도면층<br>특성</big-tool>
    <ribbon-rows>
      <ribbon-row><tool-group icons="laystate"></tool-group><cad-select class="state" flat label="layer state" value="저장되지 않은 도면층 상태"></cad-select><tool-group icons="laydown layup"></tool-group><tool-group icons="layfrz layoff"></tool-group></ribbon-row>
      <ribbon-row><tool-group icons="layiso"></tool-group><cad-select class="current" icons="bulb sun vpfrz lock black" label="layer" value="0"></cad-select><tool-group icons="laymatch layprev"></tool-group></ribbon-row>
    </ribbon-rows>
  </ribbon-panel>
  <ribbon-panel class="prop" label="특성" corner>
    <ribbon-rows>
      <ribbon-row><tool-group icons="match"></tool-group>${icon("color", 16)}<cad-select flat small icons="black" label="color" value="BYLAYER"></cad-select></ribbon-row>
      <ribbon-row><tool-group icons="list"></tool-group>${icon("plotst", 16)}<cad-select flat small off label="plot style" value="ByColor"></cad-select></ribbon-row>
    </ribbon-rows>
  </ribbon-panel>
  <ribbon-panel class="util" label="유틸리티">
    <big-tool icon="paste" drop>붙여넣기</big-tool>
    <ribbon-rows>
      <ribbon-row><tool-group icons="cut copyclip:v"></tool-group></ribbon-row>
      <ribbon-row><tool-group icons="selsim qsel"></tool-group></ribbon-row>
    </ribbon-rows>
  </ribbon-panel>`);

// ---------- model space ----------
// Line helpers; points sit on whole pixels and the group is moved by half a pixel
const L = (x1, y1, x2, y2) => `<path d="M${x1} ${y1}L${x2} ${y2}"/>`;
const arrow = (x, y, dir) => {
  const turn = { right: 0, down: 90, left: 180, up: 270 }[dir];
  return `<path class="tip" transform="translate(${x} ${y}) rotate(${turn})" d="M0 0L-9 -2V2z"/>`;
};
const hdim = (x1, x2, y) => L(x1, y, x2, y) + arrow(x1, y, "left") + arrow(x2, y, "right");
const vdim = (x, y1, y2) => L(x, y1, x, y2) + arrow(x, y1, "up") + arrow(x, y2, "down");
const num = (x, y, t) => `<text x="${x}" y="${y}">${t}</text>`;
const vnum = (x, y, t) => `<text transform="translate(${x} ${y}) rotate(-90)">${t}</text>`;
const hole = (x) => `<circle cx="${x}" cy="427" r="43"/>` + L(x, 425, x, 429);

define("cad-drawing", () => `
  <style>
    :host { display: block; position: relative; flex: 1; min-height: 0; overflow: hidden; background: #fffdf0; border: solid #cfcfcf; border-width: 2px 1px 1px 2px; }
    svg { display: block; width: 100%; height: 100%; }
    .ink { fill: none; stroke: #000; stroke-width: 1; }
    .ink path, .ink circle { shape-rendering: crispEdges; }
    .tip { fill: #000; }
    text { font: 24px "Liberation Sans", sans-serif; fill: #000; stroke-width: 1; text-anchor: middle; }
    .axis text { font: 300 26px Lato, "Open Sans", sans-serif; stroke: none; }
    .win { position: absolute; top: 7px; right: 9px; display: flex; gap: 6px; }
    button { border: 0; padding: 0; background: none; display: flex; }
  </style>
  <svg><g class="ink" transform="translate(-1.5 -148.5)">
    ${L(321, 140, 321, 223)}${L(0, 223, 321, 223)}
    ${L(413, 140, 413, 223)}${arrow(413, 222, "down")}${L(436, 140, 436, 223)}${L(411, 223, 3000, 223)}
    ${L(0, 283, 321, 283)}${arrow(321, 283, "right")}${L(0, 306, 321, 306)}${L(321, 281, 321, 859)}${L(0, 859, 321, 859)}
    ${hole(131)}${L(0, 427, 131, 427)}${arrow(131, 427, "right")}${hdim(131, 321, 427)}
    ${num(35, 426, "110")}${num(225, 426, "110")}
    ${L(436, 281, 436, 798)}${L(1195, 281, 1195, 798)}${L(411, 306, 1195, 306)}${L(411, 798, 1195, 798)}
    ${hdim(436, 1195, 283)}${num(817, 282, "440")}
    ${vdim(413, 306, 798)}${vnum(412, 553, "285")}
    ${hole(626)}${hole(816)}${hole(1005)}
    ${hdim(436, 626, 427)}${hdim(626, 816, 427)}${hdim(816, 1005, 427)}${hdim(1005, 1195, 427)}
    ${num(530, 426, "110")}${num(720, 426, "110")}${num(910, 426, "110")}${num(1100, 426, "110")}
    ${vdim(626, 306, 427)}${vdim(626, 427, 470)}${vnum(624, 368, "70")}${vnum(624, 450, "25")}
    ${hdim(438, 1215, 895)}${num(830, 894, "450")}
    ${L(438, 893, 438, 930)}${L(1215, 893, 1215, 930)}${L(413, 917, 1215, 917)}
    ${L(415, 917, 415, 930)}${arrow(415, 917, "up")}${L(826, 917, 826, 930)}${L(827, 919, 827, 922)}
    ${L(0, 911, 295, 911)}${arrow(295, 911, "right")}${L(295, 909, 295, 930)}
    <g class="axis">
      <path d="M17 892h15v15H17zM25 892V826M33 900H99M18 825h14L25 808zM99 893v14L118 900z"/>
      <path stroke="#888" d="M25 810v14M23 815l-2 9M27 815l2 9M101 900h14M101 897l10 2M101 903l10-2"/>
      ${num(27, 795, "Y")}${num(139, 909, "X")}
    </g>
    ${L(1277, 481, 1361, 481)}${L(1319, 440, 1319, 524)}<path d="M1316 478h6v6h-6z"/>
  </g></svg>
  <div class="win">${["min", "restore", "close"].map((n) => `<button aria-label="${n}">${icon(n, 14)}</button>`).join("")}</div>`);

// ---------- command window ----------
define("cad-command", () => `
  <style>
    :host { display: grid; grid-template-columns: 17px 1fr 16px; grid-template-rows: 48px 19px; background: #fff; color: #000; font: 16px/16px "Liberation Mono", "Noto Sans CJK KR", monospace; }
    .grip { grid-row: 1 / 3; background: #999; display: flex; justify-content: center; }
    .grip::before { content: ""; width: 12px; height: 4px; margin-top: 2px; background: repeating-linear-gradient(90deg, #333 0 1px, transparent 1px 2px); }
    .log { padding: 1px 0 0 2px; }
    p { margin: 0; white-space: pre; }
    .bar { display: flex; flex-direction: column; justify-content: space-between; align-items: center; padding: 4px 0; background: #f0f0f0; color: #666; }
    .line { grid-column: 2 / 4; display: flex; border-top: 1px solid #ccc; padding-left: 2px; }
    input { flex: 1; border: 0; outline: 0; padding: 0; font: inherit; min-width: 0; }
    label { line-height: 20px; }
    .scroll { width: 69px; margin-right: 17px; display: flex; align-items: center; justify-content: space-between; padding: 0 6px; box-sizing: border-box; background: #f0f0f0; color: #555; }
    .thumb { border: 1px solid #888; background: #e4e4e4; display: flex; margin-right: 16px; }
  </style>
  <div class="grip"></div>
  <div class="log">
    <p>첫 번째 구석을 지정: '_zoom</p>
    <p>윈도우 지정이 유효하지 않음.</p>
    <p>첫 번째 구석을 지정: 반대 구석 지정:</p>
  </div>
  <div class="bar">${icon("up", 8)}${icon("down", 8)}</div>
  <div class="line"><label for="cmd">명령:</label><input id="cmd" type="text">
    <div class="scroll">${icon("left", 8)}<span class="thumb">${icon("thumb", 13)}</span>${icon("right", 8)}</div></div>`);

// ---------- tool palette ----------
const PALETTE_TABS = ["모델링", "주석", "건축", "기계", "전기", "토목", "구조", "해치 ...", "테이블", "명령 ...", "지시선", "그리기", "수정", "콘크...", "문 및...", "천 - ..."];
const PALETTE_TOOLS = [["helixp", "원통형 나선"], ["spiral", "2D 나선"], ["ecyl", "타원형 원통"], ["cone", "절두체 원추"], ["pyr", "절두체 피라미드"], ["ucs", "UCS"], ["ucsp", "UCS 이전"], ["align", "3D 정렬"]];

define("tool-palette", () => `
  <style>
    :host { display: flex; width: 226px; flex: none; padding: 2px 0 3px; box-sizing: border-box; }
    button { border: 0; padding: 0; font: inherit; color: #000; }
    .tabs { width: 17px; padding-top: 20px; }
    .tabs button { display: flex; align-items: center; justify-content: center; width: 17px; height: 49px; box-sizing: border-box; background: #cdcdcd; border: solid #444; border-width: 0 0 1px 1px; border-radius: 4px 0 0 4px; }
    .tabs .on { background: #efefef; border-bottom-color: #555; }
    .tabs span { writing-mode: vertical-rl; text-orientation: sideways; transform: rotate(180deg); white-space: nowrap; line-height: 16px; }
    .rest { height: 13px; background: repeating-linear-gradient(#cdcdcd 0 4px, #444 4px 5px); border-radius: 0 0 0 3px; }
    .main { flex: 1; display: flex; flex-direction: column; }
    h2 { margin: 0; display: flex; align-items: center; gap: 6px; height: 18px; padding-left: 3px; background: #9b9b9b; border-radius: 4px 4px 0 0; font-size: 13px; line-height: 18px; color: #000; }
    h2::before { content: ""; width: 4px; height: 12px; background: repeating-linear-gradient(#333 0 1px, transparent 1px 2px); }
    .list { flex: 1; padding: 4px 7px; background: #efefef; border-radius: 3px; }
    .list button { display: flex; align-items: center; gap: 5px; width: 100%; height: 42px; background: none; font-size: 13px; }
  </style>
  <div class="tabs">
    ${PALETTE_TABS.map((t, i) => `<button class="${i ? "" : "on"}"><span>${t}</span></button>`).join("")}
    <div class="rest"></div>
  </div>
  <div class="main">
    <h2>도구 팔레트 - 전체 팔레트</h2>
    <div class="list">${PALETTE_TOOLS.map(([n, t]) => `<button>${icon(n, 30)}${t}</button>`).join("")}</div>
  </div>`);

// ---------- status bar ----------
const cell = (n, cls = "") => `<button class="${cls}" aria-label="${n}">${icon(n, 17)}</button>`;

define("cad-status", () => `
  <style>
    :host { display: flex; height: 22px; box-sizing: border-box; border-top: 1px solid #000; background: linear-gradient(#999, #7c7c7c); color: #111; }
    .xyz { width: 179px; padding-left: 12px; white-space: nowrap; font: 11px/22px "Liberation Sans", sans-serif; }
    .set { display: flex; border-left: 1px solid #555; }
    button { width: 22px; box-sizing: border-box; padding: 0; border: 0; border-right: 1px solid #555; background: linear-gradient(#c4c4c4, #989898); display: flex; align-items: center; justify-content: center; font: inherit; color: #111; }
    .on { background: linear-gradient(#d8eef4 0, #b5dbe7 50%, #90c8da 50%, #b0e0ec); }
    .right { margin-left: auto; display: flex; }
    .set + .set { margin-left: 14px; }
    .set + .near { margin-left: 6px; }
    .scale { width: 51px; gap: 4px; font-size: 13px; }
    .in { width: 31px; background: #8c8c8c; box-shadow: inset 1px 1px 2px #333; }
    .thin { width: 12px; }
  </style>
  <div class="xyz">2249,8458, 588,2026, 0,0000</div>
  <div class="set">${cell("snap")}${cell("grid")}${cell("ortho")}${cell("polar")}${cell("osnap", "on")}${cell("otrack", "on")}${cell("ducs", "on")}${cell("dyn", "on")}${cell("lwt")}${cell("qp", "on")}</div>
  <div class="right">
    <div class="set">${cell("model", "on")}${cell("layout")}${cell("lay1")}${cell("qview")}</div>
    <div class="set">${cell("pan")}${cell("lens")}${cell("wheel")}${cell("motion")}</div>
    <div class="set"><button class="scale">${icon("person", 16)}1:1${icon("down", 8)}</button>${cell("person2")}${cell("person3")}</div>
    <div class="set near">${cell("gear")}${cell("unlock")}${cell("dwg", "in")}<button class="thin" aria-label="more">${icon("down", 6)}</button>${cell("clean")}</div>
  </div>`);

// ---------- desktop taskbar ----------
define("desk-taskbar", () => `
  <style>
    :host { display: flex; align-items: center; height: 30px; overflow: hidden; color: #fff; background: linear-gradient(#999 0, #555 30%, #222 55%, #000 60%); }
    button { border: 0; padding: 0; background: none; font: inherit; color: inherit; display: flex; align-items: center; }
    .start { margin-left: 10px; }
    .quick { display: flex; gap: 6px; margin: 0 30px 0 20px; }
    .quick button { width: 17px; }
    .task { width: 156px; height: 26px; box-sizing: border-box; padding-left: 9px; gap: 4px; border: 1px solid transparent; white-space: nowrap; }
    .task + .task { margin-left: 4px; }
    .task.on { border-color: #666; border-radius: 3px; background: linear-gradient(#505050, #303030 50%, #111 55%); }
    .tray { margin-left: auto; display: flex; align-items: center; gap: 5px; padding-right: 13px; }
    time { margin-left: 3px; }
  </style>
  <button class="start" aria-label="start">${icon("orb", 40)}</button>
  <div class="quick">${["desk", "folder", "note", "calc", "ie", "pill", "music", "globea", "ring", "dark"].map((n) => `<button aria-label="${n}">${icon(n, 17)}</button>`).join("")}</div>
  <button class="task">${icon("ie", 16)}help &gt; 문의 및 입금...</button>
  <button class="task on">${icon("acad", 16)}AutoCAD 2009 - [사...</button>
  <button class="task">${icon("brush", 16)}01 - 그림판</button>
  <div class="tray">${icon("chev", 10)}${icon("net", 15)}${icon("globea", 16)}<time>오전 10:15</time></div>`);

define("cad-app", () => `
  <style>
    :host { display: flex; flex-direction: column; height: 100vh; max-width: 1680px; background: #686868; }
    .work { flex: 1; min-height: 0; display: flex; gap: 5px; }
    .left { flex: 1; min-width: 0; display: flex; flex-direction: column; gap: 4px; }
  </style>
  <cad-header></cad-header>
  <cad-ribbon></cad-ribbon>
  <div class="work">
    <div class="left"><cad-drawing></cad-drawing><cad-command></cad-command></div>
    <tool-palette></tool-palette>
  </div>
  <cad-status></cad-status>
  <desk-taskbar></desk-taskbar>`);
</script>
</body>
</html>
